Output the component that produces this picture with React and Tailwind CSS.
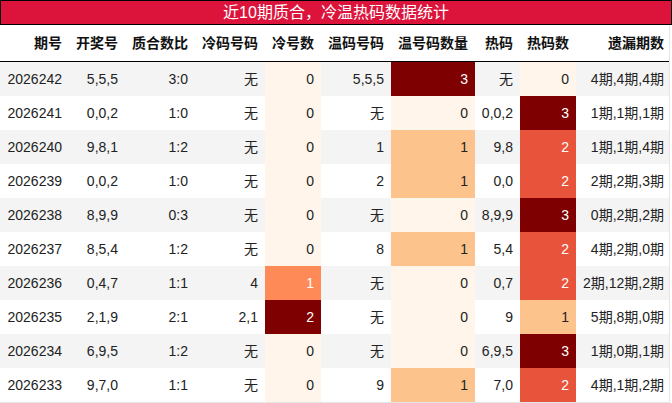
import React from "react";

const rows = [
  ["2026242", "5,5,5", "3:0", "无", 0, "5,5,5", 3, "无", 0, "4期,4期,4期"],
  ["2026241", "0,0,2", "1:0", "无", 0, "无", 0, "0,0,2", 3, "1期,1期,1期"],
  ["2026240", "9,8,1", "1:2", "无", 0, "1", 1, "9,8", 2, "1期,1期,4期"],
  ["2026239", "0,0,2", "1:0", "无", 0, "2", 1, "0,0", 2, "2期,2期,3期"],
  ["2026238", "8,9,9", "0:3", "无", 0, "无", 0, "8,9,9", 3, "0期,2期,2期"],
  ["2026237", "8,5,4", "1:2", "无", 0, "8", 1, "5,4", 2, "4期,2期,0期"],
  ["2026236", "0,4,7", "1:1", "4", 1, "无", 0, "0,7", 2, "2期,12期,2期"],
  ["2026235", "2,1,9", "2:1", "2,1", 2, "无", 0, "9", 1, "5期,8期,0期"],
  ["2026234", "6,9,5", "1:2", "无", 0, "无", 0, "6,9,5", 3, "1期,0期,1期"],
  ["2026233", "9,7,0", "1:1", "无", 0, "9", 1, "7,0", 2, "4期,1期,2期"],
];

const headers = ["期号", "开奖号", "质合数比", "冷码号码", "冷号数", "温码号码", "温号码数量", "热码", "热码数", "遗漏期数"];
const widths = ["w-[69px]", "w-[56px]", "w-[70px]", "w-[70px]", "w-[56px]", "w-[70px]", "w-[84px]", "w-[45px]", "w-[56px]", "w-[93px]"];

// OrRd-like color scale per column max
function cellColor(v, max) {
  const t = max === 0 ? 0 : v / max;
  if (t === 0) return { bg: "bg-[#fff5eb]", fg: "text-[#222]" };
  if (t < 0.4) return { bg: "bg-[#fdc38d]", fg: "text-[#222]" };
  if (t < 0.6) return { bg: "bg-[#fe8b57]", fg: "text-white" };
  if (t < 0.9) return { bg: "bg-[#e8543b]", fg: "text-white" };
  return { bg: "bg-[#7f0000]", fg: "text-white" };
}

const colMax = { 4: 2, 6: 3, 8: 3 };

export default function App() {
  return (
    <div
      className="w-[672px] h-[403px] bg-white overflow-hidden"
      style={{ fontFamily: '"Liberation Sans", Arial, "Noto Sans CJK SC", sans-serif' }}
    >
      <div className="h-[25px] bg-[#dc143c] border border-black flex items-center justify-center text-white text-[16px] leading-none">
        近10期质合，冷温热码数据统计
      </div>
      <div className="w-[670px] border-r border-[#e5e5e5]">
        <div className="flex h-[37px] border-b border-black">
          {headers.map((h, i) => (
            <div
              key={i}
              className={`${widths[i]} shrink-0 flex items-center justify-end text-[14px] font-bold text-[#111] ${i === 9 ? "pr-[5px]" : "pr-[7px]"}`}
            >
              {h}
            </div>
          ))}
        </div>
        {rows.map((r, ri) => (
          <div
            key={ri}
            className={`flex h-[34px] ${ri % 2 === 0 ? "bg-[#f4f4f4]" : "bg-white"}`}
          >
            {r.map((c, ci) => {
              let extra = "text-[#222]";
              if (colMax[ci] !== undefined) {
                const { bg, fg } = cellColor(c, colMax[ci]);
                extra = `${bg} ${fg}`;
              }
              return (
                <div
                  key={ci}
                  className={`${widths[ci]} shrink-0 flex items-center justify-end text-[14px] ${ci === 9 ? "pr-[5px]" : "pr-[7px]"} ${extra}`}
                >
                  {c}
                </div>
              );
            })}
          </div>
        ))}
        <div className="h-px bg-[#e5e5e5]" />
      </div>
    </div>
  );
}
